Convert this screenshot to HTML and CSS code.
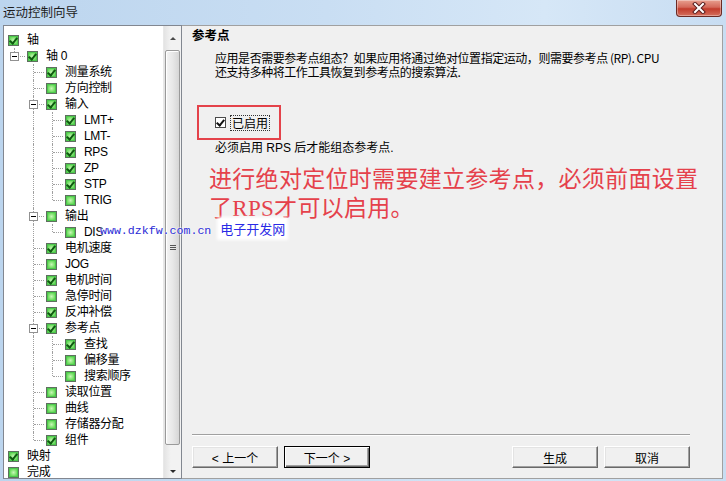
FILE: index.html
```html
<!DOCTYPE html>
<html lang="zh-CN">
<head>
  <meta charset="UTF-8" />
  <title>运动控制向导</title>
  <link rel="stylesheet" href="styles.css">
</head>
<body>
  <div class="window">
    <div class="titlebar">
      <span class="title">运动控制向导</span>
      <div class="close">
        <svg width="16" height="12" viewBox="0 0 16 12">
          <path d="M4 2 L12 10 M12 2 L4 10" stroke="#5a1e1e" stroke-width="4" stroke-linecap="square"/>
          <path d="M4 2 L12 10 M12 2 L4 10" stroke="#ffffff" stroke-width="2" stroke-linecap="square"/>
        </svg>
      </div>
    </div>

    <div class="client">
      <div class="tree">
        <div class="rows">
          <div class="row"><span class="cb on"></span><span class="lbl">轴</span></div>
          <div class="row"><span class="elb"><span class="exp"></span></span><span class="cb on"></span><span class="lbl">轴 0</span></div>
          <div class="row"><span class="gap"></span><span class="tee"></span><span class="cb on"></span><span class="lbl">测量系统</span></div>
          <div class="row"><span class="gap"></span><span class="tee"></span><span class="cb"></span><span class="lbl">方向控制</span></div>
          <div class="row"><span class="gap"></span><span class="tee"><span class="exp"></span></span><span class="cb on"></span><span class="lbl">输入</span></div>
          <div class="row"><span class="gap"></span><span class="vl"></span><span class="tee"></span><span class="cb on"></span><span class="lbl">LMT+</span></div>
          <div class="row"><span class="gap"></span><span class="vl"></span><span class="tee"></span><span class="cb on"></span><span class="lbl">LMT-</span></div>
          <div class="row"><span class="gap"></span><span class="vl"></span><span class="tee"></span><span class="cb on"></span><span class="lbl">RPS</span></div>
          <div class="row"><span class="gap"></span><span class="vl"></span><span class="tee"></span><span class="cb on"></span><span class="lbl">ZP</span></div>
          <div class="row"><span class="gap"></span><span class="vl"></span><span class="tee"></span><span class="cb on"></span><span class="lbl">STP</span></div>
          <div class="row"><span class="gap"></span><span class="vl"></span><span class="elb"></span><span class="cb"></span><span class="lbl">TRIG</span></div>
          <div class="row"><span class="gap"></span><span class="tee"><span class="exp"></span></span><span class="cb"></span><span class="lbl">输出</span></div>
          <div class="row"><span class="gap"></span><span class="vl"></span><span class="elb"></span><span class="cb"></span><span class="lbl">DIS</span></div>
          <div class="row"><span class="gap"></span><span class="tee"></span><span class="cb on"></span><span class="lbl">电机速度</span></div>
          <div class="row"><span class="gap"></span><span class="tee"></span><span class="cb"></span><span class="lbl">JOG</span></div>
          <div class="row"><span class="gap"></span><span class="tee"></span><span class="cb on"></span><span class="lbl">电机时间</span></div>
          <div class="row"><span class="gap"></span><span class="tee"></span><span class="cb"></span><span class="lbl">急停时间</span></div>
          <div class="row"><span class="gap"></span><span class="tee"></span><span class="cb on"></span><span class="lbl">反冲补偿</span></div>
          <div class="row"><span class="gap"></span><span class="tee"><span class="exp"></span></span><span class="cb on"></span><span class="lbl">参考点</span></div>
          <div class="row"><span class="gap"></span><span class="vl"></span><span class="tee"></span><span class="cb on"></span><span class="lbl">查找</span></div>
          <div class="row"><span class="gap"></span><span class="vl"></span><span class="tee"></span><span class="cb"></span><span class="lbl">偏移量</span></div>
          <div class="row"><span class="gap"></span><span class="vl"></span><span class="elb"></span><span class="cb"></span><span class="lbl">搜索顺序</span></div>
          <div class="row"><span class="gap"></span><span class="tee"></span><span class="cb"></span><span class="lbl">读取位置</span></div>
          <div class="row"><span class="gap"></span><span class="tee"></span><span class="cb"></span><span class="lbl">曲线</span></div>
          <div class="row"><span class="gap"></span><span class="tee"></span><span class="cb"></span><span class="lbl">存储器分配</span></div>
          <div class="row"><span class="gap"></span><span class="elb"></span><span class="cb on"></span><span class="lbl">组件</span></div>
          <div class="row"><span class="cb on"></span><span class="lbl">映射</span></div>
          <div class="row"><span class="cb"></span><span class="lbl">完成</span></div>
        </div>
        <div class="scrollbar">
          <div class="sb-btn"><span class="arrow up"></span></div>
          <div class="sb-track">
            <div class="thumb"><span class="grip"></span></div>
          </div>
          <div class="sb-btn"><span class="arrow down"></span></div>
        </div>
      </div>

      <div class="page">
        <h1 class="heading">参考点</h1>
        <p class="desc">应用是否需要参考点组态？如果应用将通过绝对位置指定运动，则需要参考点 (RP). CPU<br>还支持多种将工作工具恢复到参考点的搜索算法.</p>
        <div class="enable-box">
          <span class="check"></span><span class="focus">已启用</span>
        </div>
        <p class="note">必须启用 RPS 后才能组态参考点.</p>
        <p class="remark">进行绝对定位时需要建立参考点，必须前面设置<br>了RPS才可以启用。</p>

        <div class="footer">
          <div class="separator"></div>
          <div class="buttons">
            <button class="btn">&lt; 上一个</button>
            <button class="btn default">下一个 &gt;</button>
            <div class="fill"></div>
            <button class="btn">生成</button>
            <button class="btn">取消</button>
          </div>
        </div>
      </div>
    </div>

    <div class="watermark">www.dzkfw.com.cn <span class="site">电子开发网</span></div>
  </div>
</body>
</html>
```

FILE: styles.css
```css
body {
  margin: 0;
  font-family: "Liberation Sans", "Noto Sans CJK SC", sans-serif;
  font-size: 12px;
  color: #000;
  background: #c4dbf1;
}

.window {
  position: relative;
  width: 726px;
  height: 481px;
  overflow: hidden;
  background: linear-gradient(to right, #bcd5ee 0%, #c9def3 45%, #d6e7f7 75%, #c8ddf2 100%);
}

/* title bar */
.titlebar {
  height: 25px;
  display: flex;
  align-items: flex-start;
  justify-content: space-between;
}

.title {
  font-family: "Noto Sans CJK SC", sans-serif;
  font-size: 12.5px;
  line-height: 24px;
  padding-left: 3px;
  color: #1e1e1e;
}

.close {
  width: 44px;
  height: 16px;
  margin-right: 4px;
  display: flex;
  align-items: center;
  justify-content: center;
  border: 1px solid #6b2a24;
  border-top: none;
  border-radius: 0 0 4px 4px;
  background: linear-gradient(to bottom, #e8a08f 0%, #d4695a 45%, #c23c2c 55%, #d5705e 100%);
  box-shadow: inset 0 0 0 1px rgba(255,255,255,0.35);
}

/* client */
.client {
  display: flex;
  height: 454px;
  padding: 0 3px 0 3px;
}

/* tree view */
.tree {
  flex: none;
  width: 177px;
  display: flex;
  background: #fff;
  border: 1px solid #828790;
  overflow: hidden;
}

.rows {
  flex: 1;
  min-width: 0;
  padding: 6px 0 0 4px;
  overflow: hidden;
}

.row {
  display: flex;
  align-items: center;
  height: 16px;
  white-space: nowrap;
}

.gap, .vl, .tee, .elb {
  position: relative;
  flex: none;
  width: 19px;
  height: 16px;
}

.vl::before, .tee::before, .elb::before {
  content: "";
  position: absolute;
  left: 6px;
  top: 0;
  bottom: 0;
  border-left: 1px dotted #a0a0a0;
}

.elb::before {
  bottom: 8px;
}

.tee::after, .elb::after {
  content: "";
  position: absolute;
  left: 7px;
  top: 8px;
  width: 10px;
  border-top: 1px dotted #a0a0a0;
}

.exp {
  position: absolute;
  left: 2px;
  top: 4px;
  width: 7px;
  height: 7px;
  border: 1px solid #919191;
  background: #fff;
  z-index: 1;
}

.exp::before {
  content: "";
  position: absolute;
  left: 1px;
  top: 3px;
  width: 5px;
  height: 1px;
  background: #000;
}

.cb {
  position: relative;
  flex: none;
  width: 9px;
  height: 9px;
  border: 1px solid #5f6f5f;
  background: radial-gradient(circle at 50% 50%, #c8f6b8 0%, #78e068 50%, #40c040 100%);
  box-shadow: inset 0 0 0 1px #4cc84c;
  margin-right: 8px;
}

.cb.on::after {
  content: "";
  position: absolute;
  left: 2px;
  top: 0;
  width: 3px;
  height: 6px;
  border: solid #0e5a10;
  border-width: 0 2px 2px 0;
  transform: rotate(40deg);
}

.lbl {
  font-family: "Liberation Sans", "Noto Sans CJK SC", sans-serif;
  font-size: 12px;
  line-height: 16px;
  letter-spacing: -0.3px;
}

/* scrollbar */
.scrollbar {
  flex: none;
  width: 17px;
  display: flex;
  flex-direction: column;
  background: linear-gradient(to right, #e3e3e3, #f2f2f2 40%, #f2f2f2);
  border-left: 1px solid #e8e8e8;
}

.sb-btn {
  height: 17px;
  display: flex;
  align-items: center;
  justify-content: center;
}

.arrow {
  width: 0;
  height: 0;
  border-left: 3px solid transparent;
  border-right: 3px solid transparent;
}

.arrow.up {
  border-bottom: 3px solid #4a4a4a;
  margin-top: 8px;
}

.arrow.down {
  border-top: 3px solid #2a2a2a;
  margin-top: 4px;
}

.sb-track {
  flex: 1;
  padding: 7px 1px 0 1px;
}

.thumb {
  height: 393px;
  display: flex;
  align-items: center;
  justify-content: center;
  border: 1px solid #9a9a9a;
  border-radius: 2px;
  background: linear-gradient(to right, #f4f4f4 0%, #e8e8e8 50%, #d6d6d6 100%);
  box-shadow: inset 1px 1px 0 #ffffff;
}

.grip {
  width: 6px;
  height: 5px;
  background: repeating-linear-gradient(to bottom, #555 0, #555 1px, transparent 1px, transparent 2px);
}

/* wizard page */
.page {
  flex: 1;
  min-width: 0;
  display: flex;
  flex-direction: column;
  background: #f0f0f0;
  border: 1px solid #a0a0a0;
  border-left: none;
  padding: 0 32px 10px 10px;
}

.heading {
  margin: 0;
  font-family: "Noto Sans CJK SC", sans-serif;
  font-size: 12.5px;
  font-weight: bold;
  line-height: 18px;
}

.desc {
  margin: 7px 0 0 23px;
  font-family: "Noto Sans CJK SC", sans-serif;
  font-size: 12px;
  line-height: 14px;
  letter-spacing: -0.45px;
  white-space: nowrap;
}

.enable-box {
  display: flex;
  align-items: center;
  width: 64px;
  height: 31px;
  margin: 26px 0 0 5px;
  padding-left: 16px;
  border: 2px solid #e4424a;
}

.check {
  position: relative;
  width: 9px;
  height: 9px;
  border: 1px solid #4a4a4a;
  background: #fff;
  margin-right: 5px;
}

.check::after {
  content: "";
  position: absolute;
  left: 2px;
  top: 0;
  width: 3px;
  height: 6px;
  border: solid #111;
  border-width: 0 2px 2px 0;
  transform: rotate(40deg);
}

.focus {
  font-family: "Noto Sans CJK SC", sans-serif;
  font-size: 12px;
  line-height: 14px;
  padding: 0 1px;
  outline: 1px dotted #333;
}

.note {
  margin: 1px 0 0 23px;
  font-family: "Liberation Sans", "Noto Sans CJK SC", sans-serif;
  font-size: 12px;
  line-height: 14px;
}

.remark {
  margin: 10px 0 0 17px;
  font-family: "Liberation Serif", "Noto Sans CJK SC", serif;
  font-size: 23px;
  line-height: 29px;
  letter-spacing: 0.3px;
  color: #e5414b;
  white-space: nowrap;
}

.footer {
  margin-top: auto;
}

.separator {
  height: 0;
  border-top: 1px solid #a0a0a0;
  border-bottom: 1px solid #ffffff;
  margin-bottom: 10px;
}

.buttons {
  display: flex;
  gap: 6px;
}

.fill {
  flex: 1;
}

.btn {
  width: 86px;
  height: 22px;
  padding: 0;
  font-family: "Liberation Sans", "Noto Sans CJK SC", sans-serif;
  font-size: 12px;
  color: #000;
  background: #f0f0f0;
  border: 1px solid;
  border-color: #ffffff #696969 #696969 #ffffff;
  box-shadow: inset -1px -1px 0 #a0a0a0, inset 1px 1px 0 #e3e3e3;
}

.btn.default {
  border-color: #000;
  box-shadow: inset 1px 1px 0 #ffffff, inset -1px -1px 0 #696969, inset -2px -2px 0 #a0a0a0;
}

/* site watermark over the screenshot */
.watermark {
  position: absolute;
  left: 100px;
  top: 221px;
  font-family: "Liberation Mono", monospace;
  font-size: 11.6px;
  line-height: 16px;
  color: #2a2ad6;
  white-space: nowrap;
  text-shadow: 0 0 2px #fff, 0 0 2px #fff;
}

.site {
  margin-left: 1px;
  padding: 0 1px;
  font-family: "Noto Sans CJK SC", sans-serif;
  font-size: 13px;
  color: #2a2ae6;
  background: #ffffff;
  box-shadow: 0 0 3px 2px #ffffff;
}
```
